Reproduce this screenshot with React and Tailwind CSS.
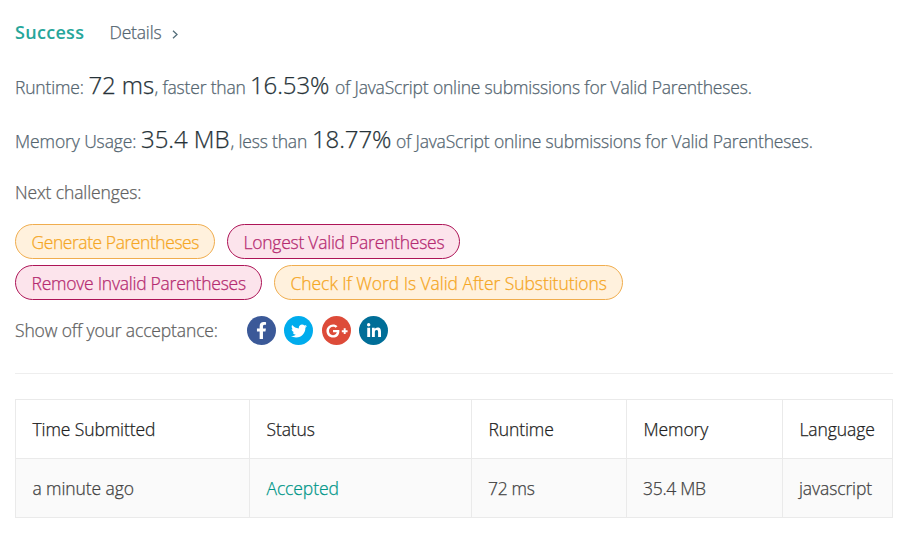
import { FaFacebookF, FaTwitter, FaGooglePlusG, FaLinkedinIn } from "react-icons/fa";

const pills = {
  medium: "border-[#f0ad4e] bg-[#fff1dd] text-[#f5a623]",
  hard: "border-[#ad1457] bg-[#fce4ec] text-[#b52a70]",
};

function Pill({ kind, className, children }) {
  return (
    <a className={`flex h-[35px] items-center rounded-full border pl-[15.5px] pt-[1px] leading-6 ${pills[kind]} ${className}`}>
      {children}
    </a>
  );
}

function Social({ className, children }) {
  return <a className={`flex size-[29px] items-center justify-center rounded-full text-white ${className}`}>{children}</a>;
}

const tail = "of JavaScript online submissions for Valid Parentheses.";

export default function App() {
  return (
    <main className="h-[539px] w-[910px] overflow-hidden whitespace-nowrap bg-white px-[15px] pt-5 font-['Open_Sans','Noto_Sans',sans-serif] text-[17.5px] font-light tracking-[-0.18px] text-[#546570] [-webkit-text-stroke:0.25px]">
      <div className="flex h-6 items-center leading-6">
        <span className="w-[94.5px] text-[18px] font-semibold tracking-[0.3px] text-[#26a69a] [-webkit-text-stroke:0px]">Success</span>
        <span className="w-[62.5px]">Details</span>
        <svg className="mt-1" width="7" height="9" viewBox="0 0 7 9" fill="none" stroke="#546e7a" strokeWidth="1.3">
          <path d="M1 .8 5 4.5 1 8.2" />
        </svg>
      </div>

      <p className="mt-6 flex h-[34px] items-baseline leading-[34px]">
        <span className="w-[73.5px]">Runtime:</span>
        <span className="w-[66px] text-2xl leading-[34px] tracking-[-0.1px] text-[#263238]">72 ms</span>
        <span className="w-[95.5px]">, faster than</span>
        <span className="w-[85px] text-2xl leading-[34px] tracking-[-0.1px] text-[#263238]">16.53%</span>
        <span>{tail}</span>
      </p>

      <p className="mt-5 flex h-[34px] items-baseline leading-[34px]">
        <span className="w-[126px] tracking-[-0.1px]">Memory Usage:</span>
        <span className="w-[89.5px] text-2xl leading-[34px] tracking-[-0.05px] text-[#263238]">35.4 MB</span>
        <span className="w-[81.5px]">, less than</span>
        <span className="w-[84px] text-2xl leading-[34px] tracking-[-0.1px] text-[#263238]">18.77%</span>
        <span>{tail}</span>
      </p>

      <p className="mt-6 leading-6 tracking-[-0.12px] text-[#616161]">Next challenges:</p>

      <div className="mt-5 flex flex-col gap-[6px]">
        <div className="flex gap-3">
          <Pill kind="medium" className="w-[200px] tracking-[-0.44px]">Generate Parentheses</Pill>
          <Pill kind="hard" className="w-[233px] tracking-[-0.25px]">Longest Valid Parentheses</Pill>
        </div>
        <div className="flex gap-3">
          <Pill kind="hard" className="w-[247px] tracking-[-0.25px]">Remove Invalid Parentheses</Pill>
          <Pill kind="medium" className="w-[349px] tracking-[-0.06px]">Check If Word Is Valid After Substitutions</Pill>
        </div>
      </div>

      <div className="mt-4 flex h-[29px] items-center">
        <span className="w-[232px] tracking-[-0.13px] text-[#616161]">Show off your acceptance:</span>
        <div className="flex gap-2">
          <Social className="bg-[#3b5998]"><FaFacebookF size={17} /></Social>
          <Social className="bg-[#00aced]"><FaTwitter size={16} /></Social>
          <Social className="ml-px bg-[#dd4b39]"><FaGooglePlusG size={22} /></Social>
          <Social className="bg-[#006e98]"><FaLinkedinIn size={16} /></Social>
        </div>
      </div>

      <hr className="mt-7 w-[878px] border-[#eeeeee]" />

      <table className="mt-[25px] w-[878px] table-fixed border-collapse text-left tracking-[-0.1px] text-[#424242]">
        <colgroup>
          <col className="w-[234px]" /><col className="w-[222px]" /><col className="w-[155px]" /><col className="w-[156px]" /><col className="w-[110px]" />
        </colgroup>
        <thead>
          <tr className="h-[59px] text-[#212121]">
            {["Time Submitted", "Status", "Runtime", "Memory", "Language"].map((label) => (
              <th key={label} className="border border-[#eaeaea] pl-[16.5px] font-light">{label}</th>
            ))}
          </tr>
        </thead>
        <tbody>
          <tr className="h-[59px] bg-[#fafafa]">
            <td className="border border-[#eaeaea] pl-[16.5px]">a minute ago</td>
            <td className="border border-[#eaeaea] pl-[16.5px] text-[#009688]">Accepted</td>
            <td className="border border-[#eaeaea] pl-4 tracking-[-0.3px]">72 ms</td>
            <td className="border border-[#eaeaea] pl-4 tracking-[-0.3px]">35.4 MB</td>
            <td className="border border-[#eaeaea] pl-4">javascript</td>
          </tr>
        </tbody>
      </table>
    </main>
  );
}
